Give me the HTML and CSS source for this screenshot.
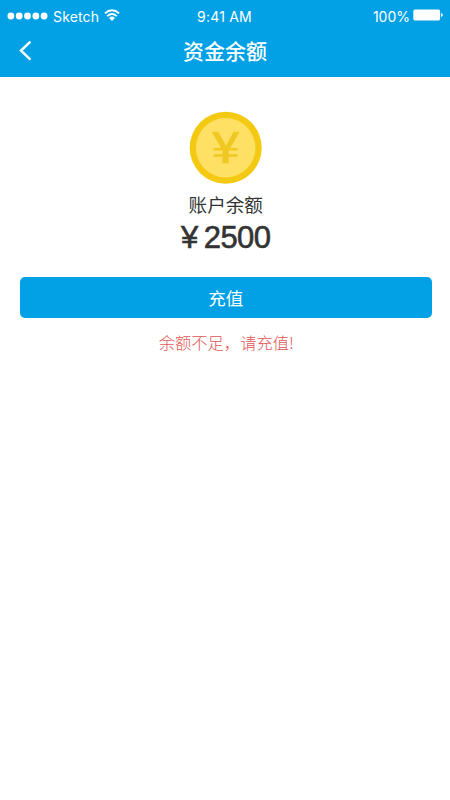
FILE: index.html
```html
<!DOCTYPE html>
<html lang="zh-CN">
<head>
<meta charset="utf-8">
<title>资金余额</title>
<link rel="stylesheet" href="styles.css">
</head>
<body>
<header class="header">
  <div class="status">
    <div class="carrier">
      <svg class="signal" width="41" height="8" viewBox="0 0 41 8"><circle cx="3.9" cy="4" r="3.4"/><circle cx="12.2" cy="4" r="3.4"/><circle cx="20.5" cy="4" r="3.4"/><circle cx="28.8" cy="4" r="3.4"/><circle cx="37.1" cy="4" r="3.4"/></svg>
      <span class="carrier-name">Sketch</span>
      <svg class="wifi" width="16" height="12" viewBox="0 0 16 12"><path d="M.9 4.4Q8-2 15.1 4.4M3.2 7.1Q8 2.8 12.8 7.1" fill="none" stroke="#fff" stroke-width="1.9"/><path d="M5 8.9Q8 6.2 11 8.9L8 11.9Z" fill="#fff"/></svg>
    </div>
    <span class="time">9:41 AM</span>
    <div class="power">
      <span>100%</span>
      <svg class="battery" width="30" height="12" viewBox="0 0 30 12"><rect x=".3" y=".4" width="26.8" height="11" rx="1.6" fill="#fff"/><path d="M28 4.1q1.7.5 1.7 1.9T28 7.9Z" fill="#fff"/></svg>
    </div>
  </div>
  <nav class="nav">
    <svg class="back" width="14" height="22" viewBox="0 0 14 22"><path d="M11.4 1.6L2 10.6l9.4 9" fill="none" stroke="#fff" stroke-width="2.5"/></svg>
    <h1 class="title">资金余额</h1>
  </nav>
</header>
<main class="content">
  <svg class="coin" width="73" height="72" viewBox="0 0 73 72"><circle cx="36.7" cy="35.8" r="36" fill="#f3c911"/><circle cx="36.7" cy="35.8" r="29.8" fill="#fde064"/><path transform="translate(.7 -.2)" d="M22 20h6.6l7.8 14L43.8 20H50L40.6 36.3H47.8v2.5H39v3.6h8.8v2.5H39v6.6h-6.2v-6.6H24v-2.5h8.8v-3.6H24v-2.5h7.4Z" fill="#f0c822"/></svg>
  <p class="label">账户余额</p>
  <p class="amount"><span>¥</span><span>2500</span></p>
  <button class="recharge">充值</button>
  <p class="warning">余额不足，请充值!</p>
</main>
</body>
</html>
```
FILE: styles.css
```css
* {
  box-sizing: border-box;
}

body {
  margin: 0;
  background: #fff;
  font-family: "Liberation Sans", "Noto Sans CJK SC", sans-serif;
  color: #333;
}

.header {
  height: 77px;
  background: #02a1e5;
  color: #fff;
}

.status {
  display: grid;
  grid-template-columns: 1fr auto 1fr;
  align-items: center;
  height: 32px;
  padding: 0 7px;
  font-family: Inter, sans-serif;
  font-size: 14px;
}

.carrier,
.power {
  display: flex;
  align-items: center;
}

.power {
  justify-content: flex-end;
  gap: 3px;
}

.signal {
  margin-top: -1px;
  fill: #fff;
}

.carrier-name {
  margin: 0 5px;
  letter-spacing: 0.15px;
}

.time {
  margin-right: 1px;
  letter-spacing: 0.2px;
}

.wifi {
  margin-top: -3px;
}

.battery {
  margin-top: -2px;
}

.nav {
  display: grid;
  grid-template-columns: 60px 1fr 60px;
  align-items: center;
  height: 37px;
}

.back {
  margin-left: 19px;
}

.title {
  margin: -2px 0 0;
  font: 500 21px/36px "Noto Sans CJK SC", sans-serif;
  text-align: center;
}

.content {
  display: flex;
  flex-direction: column;
  align-items: center;
  padding: 35px 18.5px 0 20px;
}

.coin {
  display: block;
  margin-right: 1px;
  overflow: visible;
}

.label {
  margin: 6px 0 0;
  font: 18.6px/28px "Noto Sans CJK SC", sans-serif;
}

.amount {
  display: flex;
  gap: 6px;
  margin: 2px 0 0;
  font-size: 31px;
  line-height: 36px;
  letter-spacing: -0.5px;
  -webkit-text-stroke: 0.6px #333;
}

.recharge {
  width: 100%;
  height: 41px;
  margin: 21px 0 0;
  padding: 0 0 1px;
  border: 0;
  border-radius: 5px;
  background: #02a1e5;
  color: #fff;
  font: 17.5px/39px "Noto Sans CJK SC", sans-serif;
}

.warning {
  margin: 11px 0 0;
  padding-left: 1px;
  color: #e25555;
  font: 300 16.3px/26px "Noto Sans CJK SC", sans-serif;
}
```
